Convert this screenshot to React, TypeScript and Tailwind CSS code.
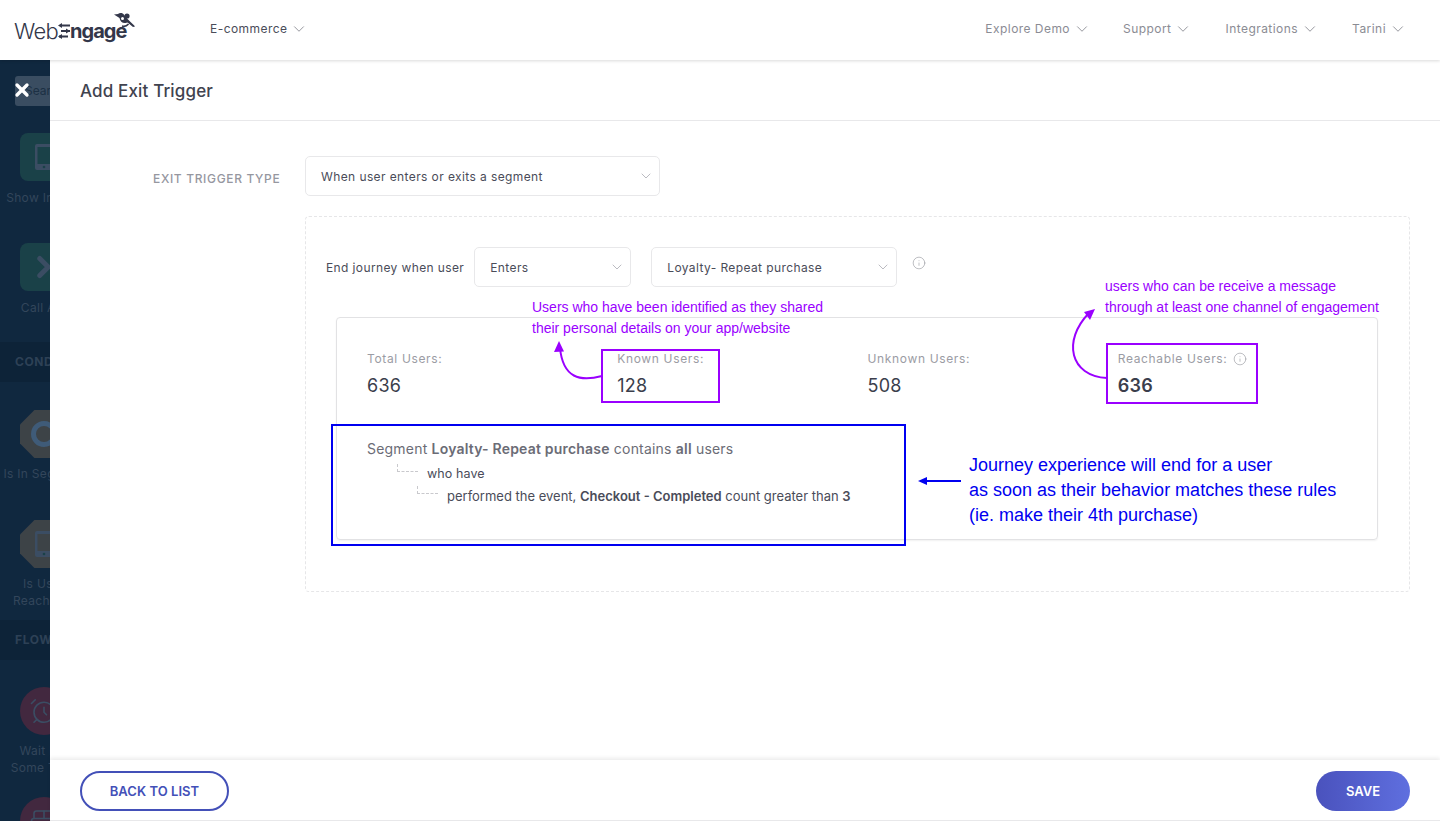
import React from "react";
import { AlarmClock, BedDouble, ChevronDown, ChevronRight, Info, X } from "lucide-react";

function Select({ text, className }: { text: string; className: string }) {
  return (
    <div className={`flex h-10 items-center justify-between rounded-[5px] border border-[#e8e8ea] bg-white pl-[15px] pr-[5px] text-[12px] tracking-[0.4px] text-[#4a4c59] ${className}`}>
      <span className="pt-[2px]">{text}</span>
      <ChevronDown size={16} strokeWidth={1.2} className="text-[#a9aab1]" />
    </div>
  );
}

function NavItem({ text, className }: { text: string; className?: string }) {
  return (
    <div className={`flex items-center gap-[3px] text-[12px] tracking-[0.45px] ${className ?? "text-[#8b8c94]"}`}>
      <span>{text}</span>
      <ChevronDown size={18} strokeWidth={1.2} className="text-[#8b8c94]" />
    </div>
  );
}

function Logo() {
  return (
    <div className="relative flex h-[30px] w-[122px] items-end text-[#33374a]">
      <span className="text-[22px] font-light leading-[26px] tracking-[-0.7px]">Web</span>
      <svg width="12" height="16" viewBox="0 0 12 16" className="mb-[5px] shrink-0">
        <path d="M3 2.500h9M3 8h9M1 13.500h9" stroke="#33374a" strokeWidth="2" fill="none" />
        <path d="M0 2.500l4-2.400v4.800zM12 8l-4-2.400v4.800zM0 13.500l4-2.400v4.800z" fill="#33374a" />
      </svg>
      <span className="text-[20px] font-bold leading-[26px] tracking-[-1px]">ngage</span>
      <svg width="22" height="22" viewBox="0 0 22 22" className="absolute left-[100px] top-[-2px]">
        <path d="M0 2.500l4-.6c2-1.600 5-1 6 .8 1.800 2.500 5 6 10 10.600l1 1.200-2 .4-5.500-4.400-2 .5c-3 .4-5.500-1.600-6-5z" fill="#33374a" />
        <circle cx="13" cy="4" r="2.600" fill="#33374a" />
        <circle cx="8.500" cy="6.500" r="1.500" fill="#ffffff" />
        <path d="M8 14c3 1 5-.3 6.500-2" stroke="#33374a" strokeWidth="1.600" fill="none" />
      </svg>
    </div>
  );
}

function Tile({ shape, color, label, icon, gap }: { shape: string; color: string; label?: React.ReactNode; icon: React.ReactNode; gap: string }) {
  return (
    <div className="flex w-[88px] flex-col items-center">
      <div className={`flex h-12 w-12 shrink-0 items-center justify-center ${shape} ${color}`}>{icon}</div>
      {label && <div className={`${gap} text-center text-[12px] leading-[17px] tracking-[0.3px] text-[#33465b]`}>{label}</div>}
    </div>
  );
}

const dev = (
  <svg width="18" height="26" viewBox="0 0 18 26">
    <path d="M2 0h14a2 2 0 012 2v22a2 2 0 01-2 2H2a2 2 0 01-2-2V2a2 2 0 012-2zm.5 3v17h13V3z" fill="#3b4d63" fillRule="evenodd" />
    <circle cx="9" cy="23" r="1.300" fill="#1a4148" />
  </svg>
);

const octagon = "[clip-path:polygon(30%_0,70%_0,100%_30%,100%_70%,70%_100%,30%_100%,0_70%,0_30%)]";

function Sidebar() {
  return (
    <aside className="relative w-[50px] shrink-0 overflow-hidden bg-[#10283f]">
      <div className="w-[100px]">
        <div className="ml-[15px] mt-4 flex h-[30px] w-[80px] items-center rounded-[3px] bg-[#3a4d61] pl-[10px] text-[12px] text-[#1c3044]">Search</div>
        <div className="mt-[27px]">
          <Tile gap="mt-[8px]" shape="rounded-lg" color="bg-[#1a4148]" label="Show In-app" icon={dev} />
        </div>
        <div className="mt-[37px]">
          <Tile gap="mt-[8px]" shape="rounded-lg" color="bg-[#1a4148]" label="Call API" icon={<ChevronRight size={34} strokeWidth={3.500} className="text-[#3b4d63]" />} />
        </div>
        <div className="mt-[26px] flex h-[40px] items-center bg-[#0d2338] pl-[15px] text-[12px] font-bold tracking-[0.6px] text-[#2d4156]">CONDITIONS</div>
        <div className="mt-[28px]">
          <Tile gap="mt-[7px]" shape={octagon} color="bg-[#3d4347]" label="Is In Segment" icon={<span className="h-[26px] w-[26px] rounded-full border-[5px] border-[#3f5b78]" />} />
        </div>
        <div className="mt-[38px]">
          <Tile gap="mt-[7px]" shape={octagon} color="bg-[#3d4347]" label={<>Is User<br />Reachable</>} icon={dev} />
        </div>
        <div className="mt-[11px] flex h-[40px] items-center bg-[#0d2338] pl-[15px] text-[12px] font-bold tracking-[0.6px] text-[#2d4156]">FLOW</div>
        <div className="mt-[27px]">
          <Tile gap="mt-[7px]" shape="rounded-full" color="bg-[#42283f]" label={<>Wait For<br />Some Time</>} icon={<AlarmClock size={30} strokeWidth={1.300} className="text-[#3b4d63]" />} />
        </div>
        <div className="mt-[21px]">
          <Tile gap="mt-[8px]" shape="rounded-full" color="bg-[#42283f]" icon={<BedDouble size={30} strokeWidth={1.300} className="text-[#3b4d63]" />} />
        </div>
      </div>
      <X size={20} strokeWidth={4} className="absolute left-[12px] top-[20px] text-white" />
    </aside>
  );
}

function Stat({ label, value, info, bold }: { label: string; value: string; info?: boolean; bold?: boolean }) {
  return (
    <div>
      <div className="flex h-[18px] items-center gap-[6px] pt-[2px] text-[12px] tracking-[0.65px] text-[#9b9ca4]">
        {label}
        {info && <Info size={14} strokeWidth={1} className="text-[#8f9097]" />}
      </div>
      <div className={`mt-[7px] text-[18px] leading-[24px] tracking-[0.25px] text-[#3b3e4c] ${bold ? "font-semibold" : ""}`}>{value}</div>
    </div>
  );
}

function Tree() {
  return <span className="absolute left-0 top-0 h-[8px] w-[21px] border-b border-l border-dashed border-[#c9c9cd]" />;
}

function Annotations() {
  return (
    <div className="pointer-events-none absolute left-0 top-0 h-full w-full font-['Liberation_Sans',sans-serif]">
      <div className="absolute left-[482px] top-[237px] text-[14px] leading-[21px] text-[#9a00ff]">
        Users who have been identified as they shared<br />their personal details on your app/website
      </div>
      <div className="absolute left-[1055px] top-[216px] text-[14px] leading-[21px] text-[#9a00ff]">
        users who can be receive a message<br />through at least one channel of engagement
      </div>
      <div className="absolute left-[551px] top-[289px] h-[54px] w-[119px] border-2 border-[#9a00ff]" />
      <div className="absolute left-[1056px] top-[283px] h-[61px] w-[152px] border-2 border-[#9a00ff]" />
      <div className="absolute left-[281px] top-[364px] h-[122px] w-[575px] border-2 border-[#0000f0]" />
      <div className="absolute left-[919px] top-[393px] text-[18px] leading-[25px] text-[#0000f0]">
        Journey experience will end for a user<br />as soon as their behavior matches these rules<br />(ie. make their 4th purchase)
      </div>
      <svg className="absolute left-0 top-0" width="1390" height="700" viewBox="0 0 1390 700" fill="none">
        <path d="M552 316C530 322 513 318 510 288" stroke="#9a00ff" strokeWidth="2" />
        <path d="M509 281l-5 11 10-.5z" fill="#9a00ff" />
        <path d="M1057 318C1020 316 1012 281 1039 253" stroke="#9a00ff" strokeWidth="2" />
        <path d="M1045 249l-11 3 6 8z" fill="#9a00ff" />
        <path d="M911 421H874" stroke="#0000f0" strokeWidth="2" />
        <path d="M868 421l9-4v8z" fill="#0000f0" />
      </svg>
    </div>
  );
}

export default function App() {
  return (
    <div className="flex h-[821px] w-[1440px] flex-col overflow-hidden bg-white font-['Inter',sans-serif] text-[#3b3e4c]">
      <header className="relative z-10 flex h-[60px] shrink-0 items-center justify-between bg-white pb-[2px] pl-[14px] pr-[33px] shadow-[0_1px_3px_rgba(0,0,0,0.15)]">
        <div className="flex items-center">
          <Logo />
          <NavItem text="E-commerce" className="ml-[74px] text-[#4a4c59]" />
        </div>
        <div className="flex items-center gap-[33px]">
          <NavItem text="Explore Demo" className="mr-[-1px] text-[#8b8c94]" />
          <NavItem text="Support" />
          <NavItem text="Integrations" />
          <NavItem text="Tarini" />
        </div>
      </header>
      <div className="flex min-h-0 flex-1">
        <Sidebar />
        <main className="relative flex min-w-0 flex-1 flex-col bg-white">
          <div className="flex h-[61px] shrink-0 items-center border-b border-[#e8e8ea] pl-[30px] pt-[3px] text-[17px] font-medium tracking-[0.15px] text-[#41434f]">
            Add Exit Trigger
          </div>
          <div className="relative flex-1 pl-[255px] pr-[30px] pt-[35px]">
            <div className="flex items-center">
              <div className="absolute left-[103px] top-[49px] text-[12px] font-medium tracking-[0.65px] text-[#96979f]">EXIT TRIGGER TYPE</div>
              <Select text="When user enters or exits a segment" className="w-[355px]" />
            </div>
            <div className="mt-5 h-[376px] rounded-[4px] border border-dashed border-[#e6e6e8] px-[20px] pt-[30px]">
              <div className="flex items-center">
                <span className="mr-[10px] pt-[2px] text-[12px] tracking-[0.38px] text-[#4a4c59]">End journey when user</span>
                <Select text="Enters" className="w-[157px]" />
                <Select text="Loyalty- Repeat purchase" className="ml-[20px] w-[246px]" />
                <Info size={14} strokeWidth={1} className="mb-[8px] ml-[15px] text-[#8f9097]" />
              </div>
              <div className="ml-[10px] mt-[30px] h-[223px] w-[1042px] rounded-[4px] border border-[#e2e2e4] pl-[30px] pr-[9px] pt-[31px] shadow-[0_1px_2px_rgba(0,0,0,0.06)]">
                <div className="grid grid-cols-4">
                  <Stat label="Total Users:" value="636" />
                  <Stat label="Known Users:" value="128" />
                  <Stat label="Unknown Users:" value="508" />
                  <Stat label="Reachable Users:" value="636" info bold />
                </div>
                <div className="mt-[41px] text-[14px] leading-[20px] tracking-[0.2px] text-[#6b6c76]">
                  Segment <b className="font-semibold">Loyalty- Repeat purchase</b> contains <b className="font-semibold">all</b> users
                </div>
                <div className="relative ml-[30px] mt-[5px] pl-[30px] text-[12.5px] leading-[20px] tracking-[0.1px] text-[#4a4c59]">
                  <Tree />who have
                </div>
                <div className="relative ml-[50px] mt-[2px] pl-[30px] text-[13px] leading-[20px] text-[#4a4c59]">
                  <Tree />performed the event, <b className="font-semibold">Checkout - Completed</b> count greater than <b className="font-semibold">3</b>
                </div>
              </div>
            </div>
          </div>
          <footer className="flex h-[61px] shrink-0 items-center justify-between border-b border-[#e8e8ea] bg-white px-[30px] pt-[1px] shadow-[0_-2px_4px_rgba(0,0,0,0.08)]">
            <button className="h-10 w-[149px] rounded-full border-2 border-[#4350b8] pt-[2px] text-[13px] font-semibold tracking-[0.05px] text-[#4350b8]">BACK TO LIST</button>
            <button className="h-10 w-[94px] rounded-full bg-gradient-to-r from-[#4a52bd] to-[#5f6fdf] pt-[2px] text-[13px] font-semibold text-white">SAVE</button>
          </footer>
          <Annotations />
        </main>
      </div>
    </div>
  );
}
